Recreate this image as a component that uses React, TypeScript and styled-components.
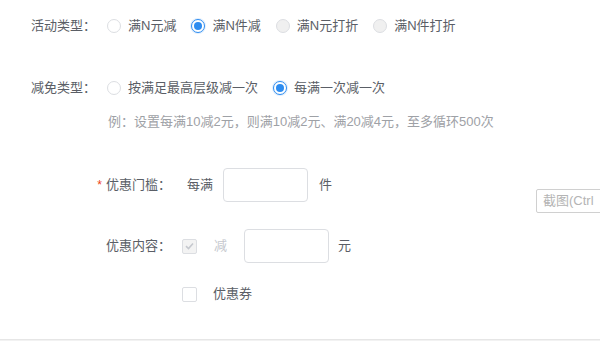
import React from "react";
import styled, { createGlobalStyle, css } from "styled-components";

const Global = createGlobalStyle`
  html, body { margin: 0; padding: 0; background: #fff; overflow: hidden; }
  body {
    font-family: "Liberation Sans", "Noto Sans CJK SC", sans-serif;
    font-size: 13px;
    color: #5a5e66;
  }
`;

const Page = styled.div`
  position: relative;
  width: 600px;
  height: 351px;
  display: flex;
  flex-direction: column;
`;

const Row = styled.div<{ $top: number; $labelW: number }>`
  display: flex;
  align-items: center;
  margin-top: ${(p) => p.$top}px;
  min-height: 32px;
  --label-w: ${(p) => p.$labelW}px;
`;

const Label = styled.div<{ $required?: boolean }>`
  width: var(--label-w);
  box-sizing: border-box;
  padding-right: 11px;
  text-align: right;
  color: #5a5e66;
  line-height: 20px;
  flex-shrink: 0;
  position: relative;
  ${(p) =>
    p.$required &&
    css`
      &::before {
        content: "*";
        color: #ed4014;
        font-family: "Liberation Sans", sans-serif;
        font-size: 12px;
        margin-right: 4px;
      }
    `}
`;

const Options = styled.div`
  display: flex;
  align-items: center;
  gap: 15px;
`;

const Option = styled.label`
  display: flex;
  align-items: center;
  gap: 7px;
  color: #5a5e66;
  line-height: 20px;
`;

const RadioDot = styled.span<{ $checked?: boolean; $disabled?: boolean }>`
  width: 14px;
  height: 14px;
  box-sizing: border-box;
  border-radius: 50%;
  border: 1px solid ${(p) => (p.$checked ? "#2d8cf0" : "#dcdee2")};
  background: ${(p) => (p.$disabled ? "#f0f0f0" : "#fff")};
  position: relative;
  flex-shrink: 0;
  ${(p) =>
    p.$checked &&
    css`
      box-shadow: 0 0 0 1px rgba(45, 140, 240, 0.15);
      &::after {
        content: "";
        position: absolute;
        left: 2px;
        top: 2px;
        width: 8px;
        height: 8px;
        border-radius: 50%;
        background: #2d8cf0;
      }
    `}
`;

const Hint = styled.div`
  margin-top: 8px;
  padding-left: 108px;
  color: #9ea1a6;
  line-height: 20px;
`;

const Content = styled.div`
  display: flex;
  align-items: center;
`;

const Text = styled.span<{ $muted?: boolean; $ml?: number; $mr?: number }>`
  color: ${(p) => (p.$muted ? "#c5c8ce" : "#5a5e66")};
  margin-left: ${(p) => p.$ml ?? 0}px;
  margin-right: ${(p) => p.$mr ?? 0}px;
  line-height: 20px;
`;

const Input = styled.div`
  width: 85px;
  height: 34px;
  box-sizing: border-box;
  border: 1px solid #dcdee2;
  border-radius: 4px;
  background: #fff;
`;

const Check = styled.span<{ $checked?: boolean; $disabled?: boolean }>`
  width: 15px;
  height: 15px;
  box-sizing: border-box;
  border: 1px solid #dcdee2;
  border-radius: 2px;
  background: ${(p) => (p.$disabled ? "#f3f3f3" : "#fff")};
  display: flex;
  align-items: center;
  justify-content: center;
  flex-shrink: 0;
`;

const Divider = styled.div`
  margin-top: auto;
  margin-bottom: 11px;
  height: 1px;
  background: #e6e6e6;
  box-shadow: 0 1px 0 #f2f2f2;
`;

const Tooltip = styled.div`
  position: absolute;
  left: 536px;
  top: 189px;
  right: -4px;
  height: 24px;
  box-sizing: border-box;
  border: 1px solid #d0d0d0;
  border-radius: 2px;
  background: #fff;
  color: #b4b4b4;
  padding-left: 6px;
  line-height: 22px;
  font-size: 13px;
  white-space: nowrap;
`;

const Tick = () => (
  <svg width="9" height="8" viewBox="0 0 9 8">
    <path d="M1 4.2 L3.5 6.5 L8 1.5" fill="none" stroke="#c5c8ce" strokeWidth="1.6" />
  </svg>
);

const activityTypes = [
  { label: "满N元减" },
  { label: "满N件减", checked: true },
  { label: "满N元打折", disabled: true },
  { label: "满N件打折", disabled: true },
];

const reduceTypes = [
  { label: "按满足最高层级减一次" },
  { label: "每满一次减一次", checked: true },
];

export default function App() {
  return (
    <>
      <Global />
      <Page>
        <Row $top={10} $labelW={107}>
          <Label>活动类型：</Label>
          <Options>
            {activityTypes.map((o) => (
              <Option key={o.label}>
                <RadioDot $checked={o.checked} $disabled={o.disabled} />
                {o.label}
              </Option>
            ))}
          </Options>
        </Row>

        <Row $top={30} $labelW={107}>
          <Label>减免类型：</Label>
          <Options>
            {reduceTypes.map((o) => (
              <Option key={o.label}>
                <RadioDot $checked={o.checked} />
                {o.label}
              </Option>
            ))}
          </Options>
        </Row>
        <Hint>例：设置每满10减2元，则满10减2元、满20减4元，至多循环500次</Hint>

        <Row $top={36} $labelW={182}>
          <Label $required>优惠门槛：</Label>
          <Content>
            <Text $ml={5} $mr={10}>每满</Text>
            <Input />
            <Text $ml={11}>件</Text>
          </Content>
        </Row>

        <Row $top={27} $labelW={182}>
          <Label>优惠内容：</Label>
          <Content>
            <Check $checked $disabled>
              <Tick />
            </Check>
            <Text $muted $ml={17} $mr={17}>减</Text>
            <Input />
            <Text $ml={9}>元</Text>
          </Content>
        </Row>

        <Row $top={15} $labelW={182}>
          <Label />
          <Content>
            <Check />
            <Text $ml={16}>优惠券</Text>
          </Content>
        </Row>

        <Divider />
        <Tooltip>截图(Ctrl</Tooltip>
      </Page>
    </>
  );
}
